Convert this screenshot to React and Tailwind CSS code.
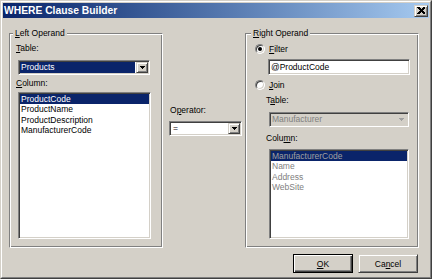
import React from 'react';

const sunken = "border border-t-[#808080] border-l-[#808080] border-b-white border-r-white shadow-[inset_1px_1px_0_#404040,inset_-1px_-1px_0_#d4d0c8]";
const raised = "border border-t-[#d4d0c8] border-l-[#d4d0c8] border-b-[#404040] border-r-[#404040] shadow-[inset_1px_1px_0_#ffffff,inset_-1px_-1px_0_#808080]";
const etched = "border border-t-[#808080] border-l-[#808080] border-b-white border-r-white shadow-[inset_1px_1px_0_#ffffff,inset_-1px_-1px_0_#808080]";

const Arrow = ({ color = '#000000' }) => (
  <svg width="5" height="3" viewBox="0 0 5 3" shapeRendering="crispEdges">
    <path d="M0 0h5v1h-1v1h-1v1h-1v-1h-1v-1h-1z" fill={color} />
  </svg>
);

const DropButton = ({ disabled }) => (
  <div className={`${raised} w-[12px] h-full flex-none flex items-center justify-center bg-[#d4d0c8]`}>
    <Arrow color={disabled ? '#a0a0a0' : '#000000'} />
  </div>
);

const Radio = ({ checked }) => (
  <span className="relative w-[10px] h-[10px] flex-none rounded-full bg-white border border-t-[#808080] border-l-[#808080] border-b-white border-r-white shadow-[inset_1px_1px_0_#404040,inset_-1px_-1px_0_#d4d0c8] flex items-center justify-center">
    {checked && <span className="w-[4px] h-[4px] rounded-full bg-black" />}
  </span>
);

const Label = ({ pre, u, post, className = '' }) => (
  <div className={`leading-[10px] h-[10px] whitespace-nowrap ${className}`}>
    {pre}<span className="underline">{u}</span>{post}
  </div>
);

const ListBox = ({ items, className, disabled }) => (
  <div className={`${sunken} bg-white p-[1px] ${className}`}>
    {items.map((it, i) => (
      <div
        key={it}
        className={`h-[10.4px] leading-[10.4px] pl-[1px] whitespace-nowrap ${
          i === 0
            ? disabled ? 'bg-[#0a246a] text-[#a0a0a0]' : 'bg-[#0a246a] text-white'
            : disabled ? 'text-[#808080]' : 'text-black'
        }`}
      >
        {it}
      </div>
    ))}
  </div>
);

export default function App() {
  return (
    <div className="w-[432px] h-[279px] bg-[#d4d0c8] text-[8.5px] text-black font-['Liberation_Sans',sans-serif] border border-t-[#d4d0c8] border-l-[#d4d0c8] border-b-[#404040] border-r-[#404040]">
      <div className="h-full border border-t-white border-l-white border-b-[#808080] border-r-[#808080] p-[1px]">
        {/* title bar */}
        <div className="flex items-center justify-between h-[15px] bg-linear-to-r from-[#0a246a] to-[#a6caf0]">
          <span className="pl-[1px] text-white font-bold text-[10.3px] leading-[15px] whitespace-nowrap">WHERE Clause Builder</span>
          <div className={`${raised} w-[14px] h-[12px] mr-[1px] bg-[#d4d0c8] flex items-center justify-center`}>
            <svg width="8" height="7" viewBox="0 0 8 7" shapeRendering="crispEdges">
              <path d="M0 0h2l2 2 2-2h2v1l-2.5 2.5L8 6v1h-2l-2-2-2 2h-2v-1l2.5-2.5L0 1z" fill="#000" />
            </svg>
          </div>
        </div>

        {/* body */}
        <div className="flex pt-[10px] px-[6px]">
          {/* left operand */}
          <fieldset className={`${etched} w-[154px] h-[220px] flex-none pl-[6px] min-w-0`}>
            <legend className="px-[2px] -ml-[3px] leading-[10px] bg-[#d4d0c8]">
              <span className="underline">L</span>eft Operand
            </legend>
            <Label className="mt-[5px]" pre="" u="T" post="able:" />
            <div className={`${sunken} mt-[7px] ml-[2px] w-[132px] h-[15px] bg-white p-[1px] flex gap-[1px]`}>
              <div className="flex-1 bg-[#0a246a] text-white pl-[1px] leading-[11px]">Products</div>
              <DropButton />
            </div>
            <Label className="mt-[3px]" pre="" u="C" post="olumn:" />
            <ListBox
              className="mt-[4px] ml-[2px] w-[133px] h-[147px]"
              items={['ProductCode', 'ProductName', 'ProductDescription', 'ManufacturerCode']}
            />
          </fieldset>

          {/* operator */}
          <div className="w-[73px] ml-[6px] flex-none flex flex-col">
            <Label className="mt-[77px] pl-[1px]" pre="O" u="p" post="erator:" />
            <div className={`${sunken} mt-[6px] h-[15px] bg-white p-[1px] flex`}>
              <div className="flex-1 pl-[2px] leading-[11px]">=</div>
              <DropButton />
            </div>
          </div>

          {/* right operand */}
          <fieldset className={`${etched} ml-[3px] w-[174px] h-[220px] flex-none pl-[9px] min-w-0`}>
            <legend className="px-[2px] -ml-[4px] leading-[10px] bg-[#d4d0c8]">
              <span className="underline">R</span>ight Operand
            </legend>
            <div className="mt-[6px] h-[10px] flex items-center gap-[4px]">
              <Radio checked />
              <Label pre="" u="F" post="ilter" />
            </div>
            <div className={`${sunken} ml-[13px] mt-[5px] w-[142px] h-[16px] bg-white pl-[2px] leading-[14px]`}>
              @ProductCode
            </div>
            <div className="mt-[5px] h-[10px] flex items-center gap-[4px]">
              <Radio />
              <Label pre="" u="J" post="oin" />
            </div>
            <Label className="mt-[5px] ml-[11px]" pre="T" u="a" post="ble:" />
            <div className={`${sunken} mt-[7px] ml-[14px] w-[140px] h-[15px] bg-[#d4d0c8] p-[1px] flex`}>
              <div className="flex-1 pl-[1px] leading-[11px] text-[#808080]">Manufacturer</div>
              <div className="w-[12px] h-full flex items-center justify-center">
                <Arrow color="#a0a0a0" />
              </div>
            </div>
            <Label className="mt-[6px] ml-[11px]" pre="Colu" u="m" post="n:" />
            <ListBox
              disabled
              className="mt-[6px] ml-[14px] w-[140px] h-[90px]"
              items={['ManufacturerCode', 'Name', 'Address', 'WebSite']}
            />
          </fieldset>
        </div>

        {/* buttons */}
        <div className="flex justify-end gap-[5px] pr-[11px] mt-[6px]">
          <button className="w-[60px] h-[19px] bg-[#d4d0c8] border border-black shadow-[inset_1px_1px_0_#ffffff,inset_-1px_-1px_0_#404040,inset_-2px_-2px_0_#808080] leading-[10px]">
            <span className="underline">O</span>K
          </button>
          <button className={`${raised} w-[60px] h-[19px] bg-[#d4d0c8] leading-[10px]`}>
            Ca<span className="underline">n</span>cel
          </button>
        </div>
      </div>
    </div>
  );
}
